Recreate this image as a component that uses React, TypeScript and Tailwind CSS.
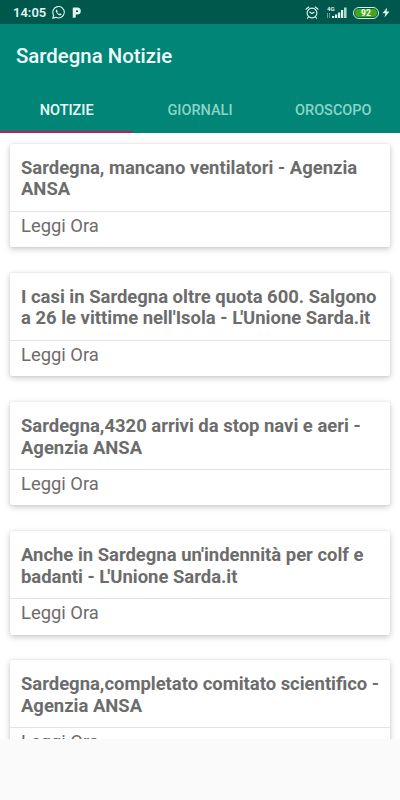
import React, { useState } from 'react';

const tabs = ['NOTIZIE', 'GIORNALI', 'OROSCOPO'];

const news = [
  'Sardegna, mancano ventilatori - Agenzia ANSA',
  "I casi in Sardegna oltre quota 600. Salgono a 26 le vittime nell'Isola - L'Unione Sarda.it",
  'Sardegna,4320 arrivi da stop navi e aeri - Agenzia ANSA',
  "Anche in Sardegna un'indennità per colf e badanti - L'Unione Sarda.it",
  'Sardegna,completato comitato scientifico - Agenzia ANSA',
];

const WhatsAppIcon = () => (
  <svg width="13" height="13" viewBox="0 0 26 26" fill="none" stroke="currentColor">
    <path d="M1.5 24.5l1.8-6A11.5 11.5 0 1 1 7.8 22.7z" strokeWidth="2.2" strokeLinejoin="round" />
    <path
      d="M9.2 6.8c-.9.3-1.7 1.3-1.7 2.7 0 4 5.2 9.2 9 9.2 1.4 0 2.6-1 2.7-2.4l-3.3-1.9-1.6 1.6c-1.8-.7-3.2-2.1-4-3.9l1.2-1.5z"
      fill="currentColor"
      stroke="none"
    />
  </svg>
);

const ParkingIcon = () => (
  <svg width="9" height="11" viewBox="0 0 18 22" fill="currentColor">
    <path
      fillRule="evenodd"
      d="M3 1h7.5a7 7 0 0 1 0 14.2H7.6V19A2.4 2.4 0 0 1 5.2 21.4H1.5V2.5A1.5 1.5 0 0 1 3 1zM8 6.4v3.8h2.2a1.9 1.9 0 0 0 0-3.8z"
    />
  </svg>
);

const AlarmIcon = () => (
  <svg width="14" height="13" viewBox="0 0 28 26" fill="none" stroke="currentColor" strokeWidth="2.3" strokeLinecap="round">
    <circle cx="14" cy="14" r="9.8" />
    <path d="M2 6.5L7.5 2M26 6.5L20.5 2M7 22l-2 2.4M21 22l2 2.4M9.5 12l4.5 3.2 4-2.7" />
  </svg>
);

const SignalIcon = () => (
  <svg width="22" height="13" viewBox="0 0 22 13" fill="currentColor">
    <text x="1" y="5.2" fontSize="6" fontWeight="700" fontFamily="Roboto, sans-serif">4G</text>
    <path d="M1 7h1v5H1zM3 7h1v5H3z" opacity=".45" />
    <path d="M6 10h2.2v2H6zM9 8.5h2.2V12H9zM12 6.5h2.2V12H12zM15 4h2.2v8H15z" />
    <path d="M18 1.5h2.6V12H18z" opacity=".8" />
  </svg>
);

const BoltIcon = () => (
  <svg width="8" height="11" viewBox="0 0 16 22" fill="currentColor">
    <path d="M10.5 1L1 12.3h5.8L5 21 15 9.2H9z" />
  </svg>
);

const StatusBar = () => (
  <div className="flex h-6 shrink-0 items-center justify-between bg-[#00574b] pl-[13px] pr-[10px] text-[#e0f5f0]">
    <div className="flex items-center pt-px">
      <span className="w-[39px] text-[13px] leading-4 font-semibold">14:05</span>
      <WhatsAppIcon />
      <span className="ml-[7px]"><ParkingIcon /></span>
    </div>
    <div className="flex items-center pt-px">
      <AlarmIcon />
      <span className="ml-[7px]"><SignalIcon /></span>
      <span className="ml-[5px] flex h-3 w-[26px] rounded-full border border-[#d5efe6] p-px">
        <span className="flex flex-1 items-center justify-center rounded-full bg-[#43a818] pt-px text-[8.5px] leading-none font-bold text-white">92</span>
      </span>
      <span className="ml-[3px]"><BoltIcon /></span>
    </div>
  </div>
);

// Pull the apostrophe towards the capital L (L'Unione)
const kern = (title: string) =>
  title.split(/(L(?='))/).map((part, i) =>
    i % 2 ? <span key={i} className="tracking-[-2px]">{part}</span> : part
  );

const NewsCard = ({ title }: { title: string }) => (
  <article className="h-[103.3px] shrink-0 rounded-[2px] bg-white shadow-[0_2px_6px_rgba(0,0,0,0.22),0_0_2px_rgba(0,0,0,0.10)]">
    <h2 className="h-[68px] border-b border-[#e2e2e2] pt-[14px] pl-[10.7px] text-[18.45px] leading-[21.5px] font-bold text-[#6c6c6c]">
      {kern(title)}
    </h2>
    <p className="pt-[3px] pl-[10.7px] text-[18.4px] leading-[22px] text-[#6c6c6c]">Leggi Ora</p>
  </article>
);

const App = () => {
  const [active, setActive] = useState(0);

  return (
    <div className="flex h-[800px] w-[400px] flex-col overflow-hidden bg-[#fafafa] font-['Roboto',sans-serif]">
      <StatusBar />

      <header className="flex h-[109px] shrink-0 flex-col bg-[#008577]">
        <h1 className="h-[62px] pt-5 pl-4 text-[20.4px] leading-6 font-medium text-[#f0fffc]">Sardegna Notizie</h1>
        <nav className="grid flex-1 grid-cols-3">
          {tabs.map((tab, i) => (
            <button
              key={tab}
              onClick={() => setActive(i)}
              className={`border-b-2 pt-[4px] text-[14.5px] font-medium ${
                i === active ? 'border-[#b81f5e] text-[#f0fffc]' : 'border-transparent text-[#8fd3c8]'
              }`}
            >
              {tab}
            </button>
          ))}
        </nav>
      </header>

      {/* News list, the last card is cut by the ad area */}
      <main className="flex h-[606px] shrink-0 flex-col gap-[25.9px] overflow-hidden bg-white px-[10.3px] pt-[10.7px]">
        {news.map((title) => (
          <NewsCard key={title} title={title} />
        ))}
      </main>
    </div>
  );
};

export default App;
